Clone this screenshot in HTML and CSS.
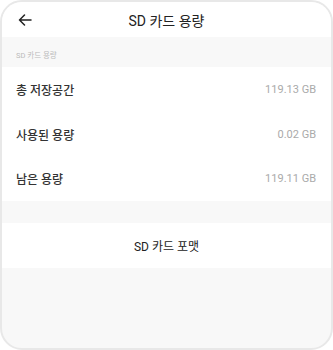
FILE: index.html
```html
<!DOCTYPE html>
<html lang="ko">
  <head>
    <meta charset="UTF-8" />
    <meta name="viewport" content="width=device-width, initial-scale=1.0" />
    <title>SD 카드 용량</title>
    <link rel="stylesheet" href="styles.css">
  </head>

  <body>
    <section class="phone">
      <header class="top_bar">
        <span class="back">
          <svg width="14" height="12" viewBox="0 0 14 12">
            <path d="M13 6H1.5M6.5 1L1.5 6l5 5" fill="none" stroke="#222" stroke-width="1.5" stroke-linecap="round" stroke-linejoin="round" />
          </svg>
        </span>
        <h1>SD 카드 용량</h1>
      </header>

      <div class="group_title">SD 카드 용량</div>

      <ul class="list">
        <li class="row">
          <span class="label">총 저장공간</span>
          <span class="value">119.13 GB</span>
        </li>
        <li class="row">
          <span class="label">사용된 용량</span>
          <span class="value">0.02 GB</span>
        </li>
        <li class="row">
          <span class="label">남은 용량</span>
          <span class="value">119.11 GB</span>
        </li>
      </ul>

      <div class="spacer"></div>

      <button class="format_btn">SD 카드 포맷</button>
    </section>
  </body>
</html>
```

FILE: styles.css
```css
* {
  padding: 0;
  margin: 0;
  box-sizing: border-box;
}

body {
  width: 333px;
  height: 350px;
  background: #fff;
  font-family: Roboto, "Noto Sans CJK KR", sans-serif;
}

.phone {
  display: flex;
  flex-direction: column;
  width: 333px;
  height: 350px;
  border: 2px solid #e8e8e8;
  border-radius: 22px;
  background: #f8f8f8;
  overflow: hidden;
}

.top_bar {
  position: relative;
  display: flex;
  align-items: center;
  justify-content: center;
  height: 35px;
  background: #fff;
}

.back {
  position: absolute;
  left: 16px;
  top: 12px;
  display: flex;
}

.top_bar h1 {
  font-size: 14px;
  font-weight: 400;
  color: #222;
  margin-top: 1px;
}

.group_title {
  height: 30px;
  padding: 12px 0 0 14px;
  font-size: 7.5px;
  color: #bbb;
}

.list {
  list-style: none;
  background: #fff;
}

.row {
  display: flex;
  justify-content: space-between;
  align-items: center;
  height: 44.7px;
  padding: 0 15px 0 14px;
}

.label {
  font-size: 12px;
  font-weight: 500;
  color: #333;
}

.value {
  font-size: 11px;
  color: #aaa;
}

.spacer {
  height: 22px;
}

.format_btn {
  height: 45px;
  border: none;
  background: #fff;
  font-family: inherit;
  font-size: 12px;
  color: #222;
}
```
